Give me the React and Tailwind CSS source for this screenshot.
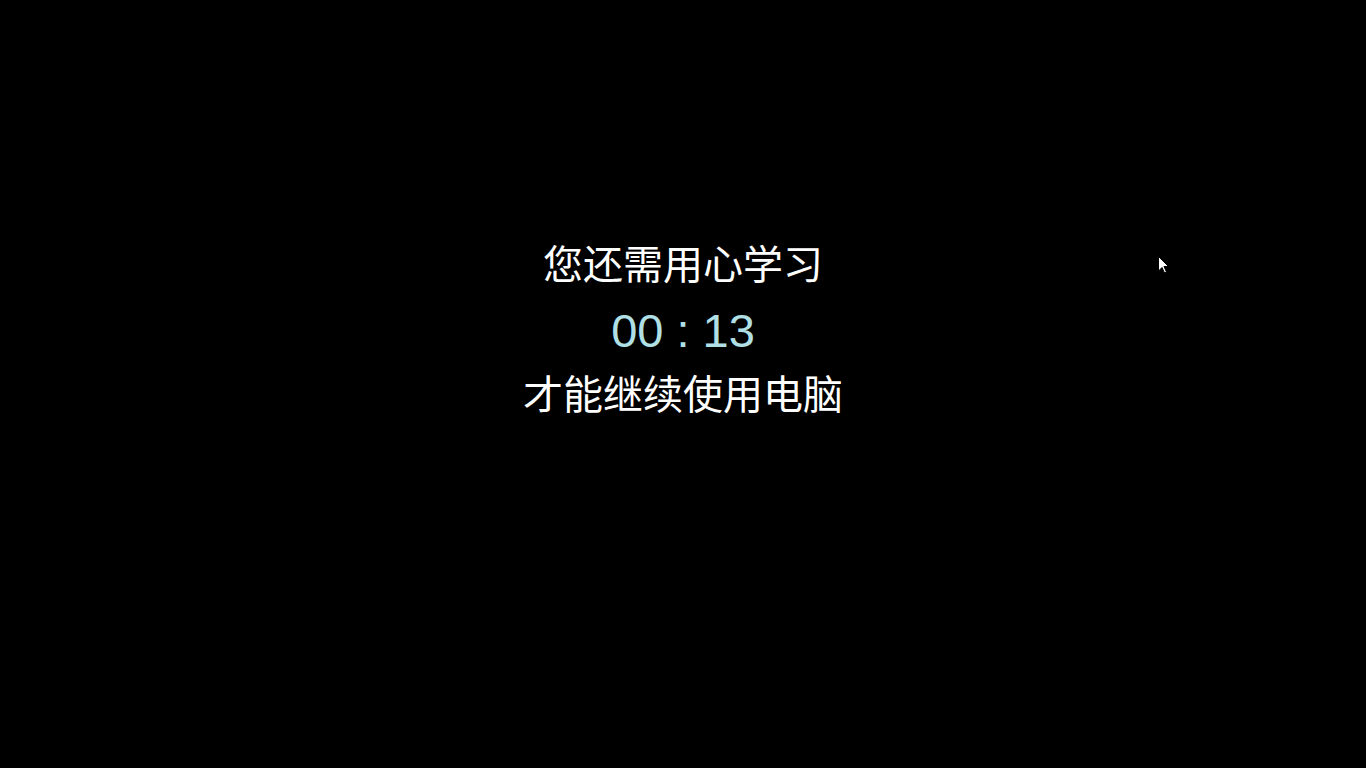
export default function App() {
  return (
    <div className="relative h-[768px] w-full overflow-hidden bg-black font-['Liberation_Sans','Noto_Sans_CJK_SC',sans-serif]">
      <div className="flex flex-col items-center pt-[233px]">
        <p className="text-[40px] leading-[65px] text-white">您还需用心学习</p>
        <p className="text-[47px] leading-[65px] text-[#b0e0e6]">00 : 13</p>
        <p className="text-[40px] leading-[65px] text-white">才能继续使用电脑</p>
      </div>

      {/* mouse pointer */}
      <svg className="absolute left-[1158px] top-[256px]" width="12" height="19" viewBox="0 0 12 19">
        <path d="M0.5 0.5 L0.5 15 L4 11.5 L6.5 17 L8.5 16 L6 10.5 L10.5 10.5 Z" fill="#fff" stroke="#000" strokeWidth="1" />
      </svg>
    </div>
  );
}
